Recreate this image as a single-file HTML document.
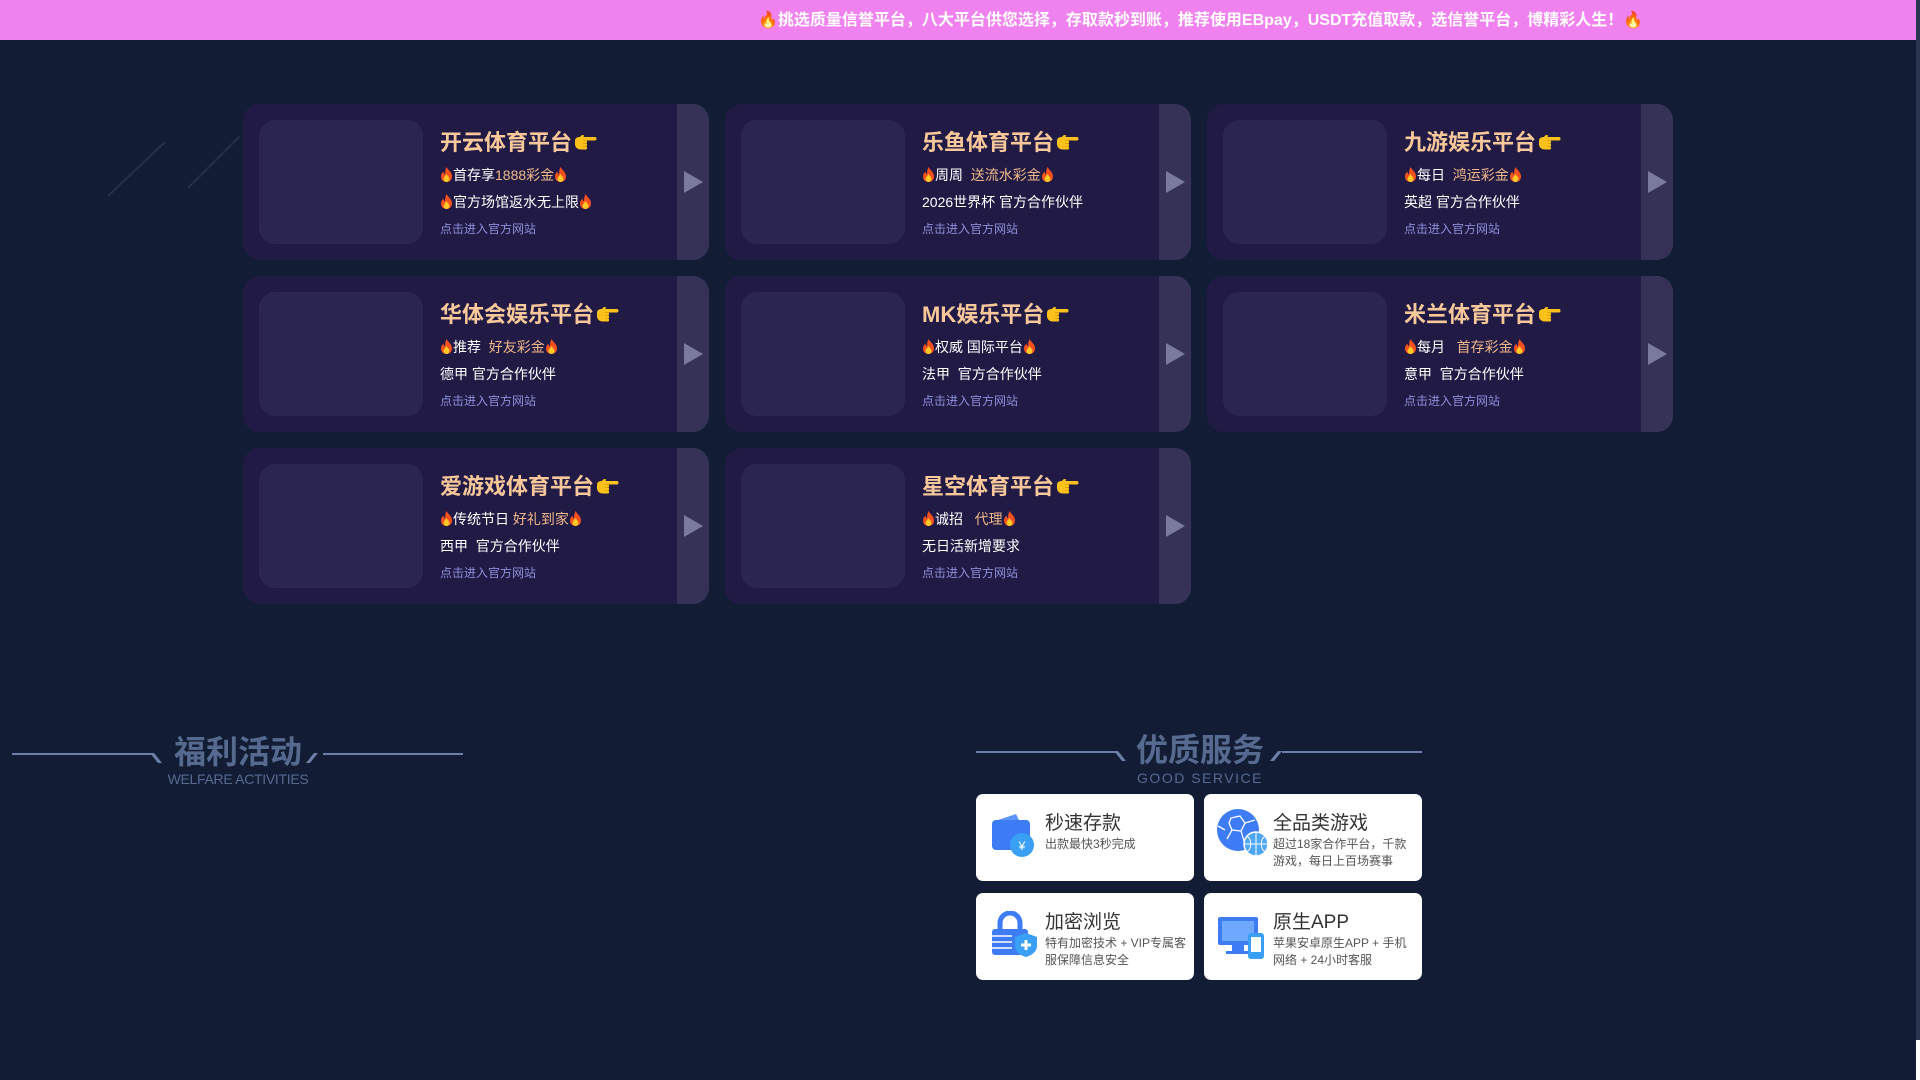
<!DOCTYPE html>
<html><head><meta charset="utf-8"><style>
*{margin:0;padding:0;box-sizing:border-box}
body{width:1920px;height:1080px;background:#121d35;overflow:hidden;position:relative;font-family:"Liberation Sans","Noto Sans CJK SC",sans-serif;color:#fff}
.top{position:absolute;left:0;top:0;width:1916px;height:40px;background:#ef82ef}
.top span{position:absolute;left:758px;top:6px;font-size:16px;font-weight:bold;white-space:nowrap;color:#fff}
.sb{position:absolute;left:1916px;top:0;width:4px;height:1040px;background:#2a3550}
.sb2{position:absolute;left:1916px;top:1040px;width:4px;height:40px;background:#fff}
.card{position:absolute;width:466px;height:156px;background:#201a45;border-radius:16px;overflow:hidden}
.card .img{position:absolute;left:16px;top:16px;width:164px;height:124px;background:#2b2650;border-radius:16px}
.card .arr{position:absolute;right:0;top:0;width:32px;height:156px;background:#363257}
.card .arr:after{content:"";position:absolute;left:7px;top:67px;border-left:19px solid #7a7a9f;border-top:11px solid transparent;border-bottom:11px solid transparent}
.t{position:absolute;left:197px;top:25px;font-size:22px;font-weight:bold;color:#f8c89a;white-space:nowrap;line-height:28px}
.l1,.l2{position:absolute;left:197px;font-size:14px;white-space:nowrap;line-height:18px}
.l1{top:62px}.l2{top:89px}
.h{color:#f0b88a}
.lk{position:absolute;left:197px;top:116px;font-size:12px;color:#8d8fd8;white-space:nowrap}
.f{display:inline-block;width:13px;height:15px;vertical-align:-2px}
.hand{display:inline-block;width:26px;height:20px;vertical-align:-2px}
.ttl{position:absolute;text-align:center;color:#56698f;font-weight:bold}
.line{position:absolute;height:2px;background:#6d7fa6}
.sv{position:absolute;width:218px;height:87px;background:#fff;border-radius:7px}
.sv b{position:absolute;left:69px;top:14px;font-size:19px;font-weight:normal;color:#333}
.sv p{position:absolute;left:69px;top:42px;font-size:12px;color:#555;line-height:17px;width:145px}
.sv svg{position:absolute;left:12px;top:18px}
</style></head><body>
<div class="top"><span>🔥挑选质量信誉平台，八大平台供您选择，存取款秒到账，推荐使用EBpay，USDT充值取款，选信誉平台，博精彩人生！🔥</span></div>
<div class="sb"></div><div class="sb2"></div>
<svg style="position:absolute;left:100px;top:130px" width="150" height="70"><line x1="8" y1="66" x2="65" y2="12" stroke="#253048" stroke-width="2"/><line x1="88" y1="58" x2="140" y2="6" stroke="#253048" stroke-width="2"/></svg>

<svg width="0" height="0" style="position:absolute"><defs>
<symbol id="fire" viewBox="0 0 13 15"><path d="M6.5 0C8 3 12 5 12 9.5 12 13 9.5 15 6.5 15S1 13 1 9.5C1 7 2.5 5.5 3.5 4.5 3.5 6.5 4.5 7 5 7 5 4.5 5.5 2 6.5 0Z" fill="#f4511e"/><path d="M6.5 7C7.5 9 9.5 10 9.5 12 9.5 13.8 8 15 6.5 15S3.5 13.8 3.5 12C3.5 10.5 5 9.5 6.5 7Z" fill="#ffca28"/></symbol>
<symbol id="hand" viewBox="0 0 26 20"><path d="M3 9C3 6 5 5 8 5h15c2 0 2 3.5 0 3.5H14c1.5 0 1.5 3 0 3 1.5 0 1.5 3 0 3 1.5 0 1.5 3 0 3H9C5 17.5 3 15 3 12Z" fill="#fcc21b"/><path d="M14 11.5h-3M14 14.5h-3M14 8.5h-3" stroke="#e0a000" stroke-width="0.8"/><path d="M8 5C9 3 11 2.5 12 3.5 12.5 4.5 11 5 11 5Z" fill="#fcc21b"/></symbol>
</defs></svg>

<div class="card" style="left:243px;top:104px"><div class="img"></div><div class="arr"></div>
<div class="t">开云体育平台<svg class="hand"><use href="#hand"/></svg></div>
<div class="l1"><svg class="f"><use href="#fire"/></svg>首存享<span class="h">1888彩金</span><svg class="f"><use href="#fire"/></svg></div>
<div class="l2"><svg class="f"><use href="#fire"/></svg>官方场馆返水无上限<svg class="f"><use href="#fire"/></svg></div>
<div class="lk">点击进入官方网站</div></div>

<div class="card" style="left:725px;top:104px"><div class="img"></div><div class="arr"></div>
<div class="t">乐鱼体育平台<svg class="hand"><use href="#hand"/></svg></div>
<div class="l1"><svg class="f"><use href="#fire"/></svg>周周&nbsp;&nbsp;<span class="h">送流水彩金</span><svg class="f"><use href="#fire"/></svg></div>
<div class="l2">2026世界杯 官方合作伙伴</div>
<div class="lk">点击进入官方网站</div></div>

<div class="card" style="left:1207px;top:104px"><div class="img"></div><div class="arr"></div>
<div class="t">九游娱乐平台<svg class="hand"><use href="#hand"/></svg></div>
<div class="l1"><svg class="f"><use href="#fire"/></svg>每日&nbsp;&nbsp;<span class="h">鸿运彩金</span><svg class="f"><use href="#fire"/></svg></div>
<div class="l2">英超 官方合作伙伴</div>
<div class="lk">点击进入官方网站</div></div>

<div class="card" style="left:243px;top:276px"><div class="img"></div><div class="arr"></div>
<div class="t">华体会娱乐平台<svg class="hand"><use href="#hand"/></svg></div>
<div class="l1"><svg class="f"><use href="#fire"/></svg>推荐&nbsp;&nbsp;<span class="h">好友彩金</span><svg class="f"><use href="#fire"/></svg></div>
<div class="l2">德甲 官方合作伙伴</div>
<div class="lk">点击进入官方网站</div></div>

<div class="card" style="left:725px;top:276px"><div class="img"></div><div class="arr"></div>
<div class="t">MK娱乐平台<svg class="hand"><use href="#hand"/></svg></div>
<div class="l1"><svg class="f"><use href="#fire"/></svg>权威 国际平台<svg class="f"><use href="#fire"/></svg></div>
<div class="l2">法甲&nbsp;&nbsp;官方合作伙伴</div>
<div class="lk">点击进入官方网站</div></div>

<div class="card" style="left:1207px;top:276px"><div class="img"></div><div class="arr"></div>
<div class="t">米兰体育平台<svg class="hand"><use href="#hand"/></svg></div>
<div class="l1"><svg class="f"><use href="#fire"/></svg>每月&nbsp;&nbsp;&nbsp;<span class="h">首存彩金</span><svg class="f"><use href="#fire"/></svg></div>
<div class="l2">意甲&nbsp;&nbsp;官方合作伙伴</div>
<div class="lk">点击进入官方网站</div></div>

<div class="card" style="left:243px;top:448px"><div class="img"></div><div class="arr"></div>
<div class="t">爱游戏体育平台<svg class="hand"><use href="#hand"/></svg></div>
<div class="l1"><svg class="f"><use href="#fire"/></svg>传统节日 <span class="h">好礼到家</span><svg class="f"><use href="#fire"/></svg></div>
<div class="l2">西甲&nbsp;&nbsp;官方合作伙伴</div>
<div class="lk">点击进入官方网站</div></div>

<div class="card" style="left:725px;top:448px"><div class="img"></div><div class="arr"></div>
<div class="t">星空体育平台<svg class="hand"><use href="#hand"/></svg></div>
<div class="l1"><svg class="f"><use href="#fire"/></svg>诚招&nbsp;&nbsp;&nbsp;<span class="h">代理</span><svg class="f"><use href="#fire"/></svg></div>
<div class="l2">无日活新增要求</div>
<div class="lk">点击进入官方网站</div></div>

<div class="line" style="left:12px;top:753px;width:140px"></div>
<div class="line" style="left:323px;top:753px;width:140px"></div>
<svg style="position:absolute;left:150px;top:752px" width="170" height="14"><path d="M0 1h4l8 10h-4z M168 1h-4l-8 10h4z" fill="#6d7fa6"/></svg>
<div class="ttl" style="left:130px;top:733px;width:216px;font-size:32px;line-height:38px">福利活动</div>
<div class="ttl" style="left:130px;top:771px;width:216px;font-size:14px;font-weight:normal;letter-spacing:-0.3px">WELFARE ACTIVITIES</div>

<div class="line" style="left:976px;top:751px;width:140px"></div>
<div class="line" style="left:1282px;top:751px;width:140px"></div>
<svg style="position:absolute;left:1114px;top:750px" width="170" height="14"><path d="M0 1h4l8 10h-4z M168 1h-4l-8 10h4z" fill="#6d7fa6"/></svg>
<div class="ttl" style="left:1100px;top:731px;width:200px;font-size:32px;line-height:38px">优质服务</div>
<div class="ttl" style="left:1100px;top:770px;width:200px;font-size:14px;font-weight:normal;letter-spacing:1.5px">GOOD SERVICE</div>

<div class="sv" style="left:976px;top:794px"><svg width="52" height="50"><rect x="4" y="8" width="38" height="30" rx="4" fill="#3d7cf5"/><path d="M10 8l18-6 3 6z" fill="#5a95fa"/><circle cx="34" cy="33" r="12" fill="#3aa0f5"/><text x="34" y="38" font-size="12" fill="#fff" text-anchor="middle" font-family="Liberation Sans">¥</text></svg><b>秒速存款</b><p>出款最快3秒完成</p></div>
<div class="sv" style="left:1204px;top:794px"><svg width="54" height="52" style="top:14px"><circle cx="22" cy="22" r="21" fill="#3d7cf5"/><path d="M15 10l9-2 5 7-4 8-9-1-3-7zM2 18l7 4M29 15l10-3M25 23l3 10M16 22l-5 9" stroke="#fff" stroke-width="1.3" fill="none"/><circle cx="40" cy="36" r="12" fill="#4fa8f7" stroke="#fff" stroke-width="1.5"/><path d="M28 36h24M40 24v24M31 28c5 4 5 12 0 16M49 28c-5 4-5 12 0 16" stroke="#fff" stroke-width="1" fill="none"/></svg><b>全品类游戏</b><p>超过18家合作平台，千款游戏，每日上百场赛事</p></div>
<div class="sv" style="left:976px;top:893px"><svg width="52" height="50"><path d="M12 18v-6a10 10 0 0 1 20 0v6" stroke="#3d7cf5" stroke-width="5" fill="none"/><rect x="4" y="18" width="36" height="26" rx="3" fill="#3d7cf5"/><path d="M4 25h20M4 31h20M4 37h20" stroke="#fff" stroke-width="1.5"/><path d="M38 22l11 4v8c0 7-5 10-11 12-6-2-11-5-11-12v-8z" fill="#3aa0f5"/><path d="M38 29v10M33 34h10" stroke="#fff" stroke-width="3"/></svg><b>加密浏览</b><p>特有加密技术 + VIP专属客服保障信息安全</p></div>
<div class="sv" style="left:1204px;top:893px"><svg width="52" height="50"><rect x="2" y="6" width="40" height="28" rx="2" fill="#3d7cf5"/><rect x="6" y="10" width="32" height="20" fill="#6ea8ff"/><rect x="16" y="34" width="12" height="6" fill="#3d7cf5"/><rect x="10" y="40" width="24" height="3" fill="#3d7cf5"/><rect x="32" y="22" width="16" height="26" rx="3" fill="#3aa0f5"/><rect x="35" y="26" width="10" height="15" fill="#fff"/></svg><b>原生APP</b><p>苹果安卓原生APP + 手机网络 + 24小时客服</p></div>
</body></html>
